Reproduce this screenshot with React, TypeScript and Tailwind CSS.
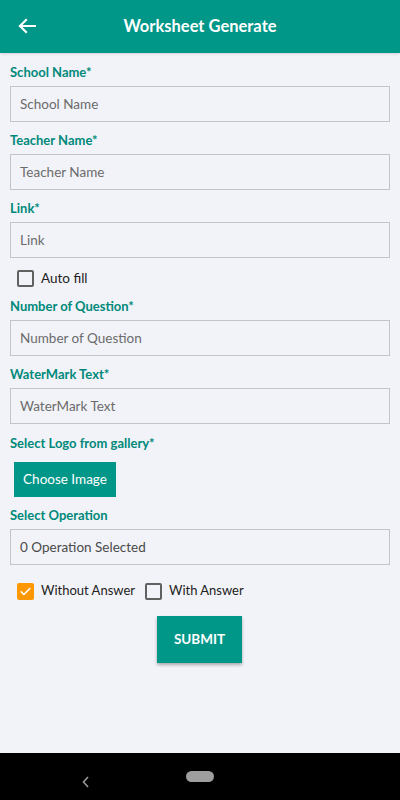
import React from "react";

const Field = ({ label, placeholder, dark }: { label: string; placeholder: string; dark?: boolean }) => (
  <div className="flex flex-col">
    <div className="h-[20px] flex items-center text-[13px] font-bold text-[#00897b] leading-none">{label}</div>
    <div className="mt-[4px] h-[36px] border border-[#c4c4c8] flex items-center px-[9px]">
      <span className={`text-[13.5px] ${dark ? "text-[#4a4a4a]" : "text-[#6b6b6b]"}`}>{placeholder}</span>
    </div>
  </div>
);

const Box = ({ checked }: { checked?: boolean }) =>
  checked ? (
    <div className="w-[17px] h-[17px] rounded-[2px] bg-[#ff9800] flex items-center justify-center">
      <svg width="13" height="13" viewBox="0 0 24 24" fill="none" stroke="white" strokeWidth="3" strokeLinecap="round" strokeLinejoin="round">
        <path d="M4 12.5l5 5L20 6.5" />
      </svg>
    </div>
  ) : (
    <div className="w-[17px] h-[17px] rounded-[2px] border-2 border-[#616161]" />
  );

export default function App() {
  return (
    <div className="w-[400px] h-[800px] bg-[#f2f3f8] flex flex-col" style={{ fontFamily: 'Lato, "Noto Sans", sans-serif' }}>
      <div className="h-[53px] bg-[#009688] flex items-center relative shadow-sm">
        <svg className="absolute left-[18px] top-[18px]" width="18" height="16" viewBox="0 0 18 16" fill="none" stroke="white" strokeWidth="2.2" strokeLinecap="square">
          <path d="M2 8h15M8 2L2 8l6 6" />
        </svg>
        <div className="w-full text-center text-white text-[16.5px] font-bold">Worksheet Generate</div>
      </div>
      <div className="flex-1 flex flex-col px-[10px] pt-[9px]">
        <Field label="School Name*" placeholder="School Name" />
        <div className="h-[8px]" />
        <Field label="Teacher Name*" placeholder="Teacher Name" />
        <div className="h-[8px]" />
        <Field label="Link*" placeholder="Link" />
        <div className="flex items-center h-[24px] mt-[8px] pl-[7px] gap-[7px]">
          <Box />
          <span className="text-[13.5px] text-[#222]">Auto fill</span>
        </div>
        <div className="h-[6px]" />
        <Field label="Number of Question*" placeholder="Number of Question" />
        <div className="h-[8px]" />
        <Field label="WaterMark Text*" placeholder="WaterMark Text" />
        <div className="h-[9px] shrink-0" />
        <div className="h-[20px] flex items-center text-[13px] font-bold text-[#00897b] leading-none">Select Logo from gallery*</div>
        <div className="mt-[9px] ml-[4px] w-[102px] h-[35px] bg-[#009688] flex items-center justify-center text-white text-[13.5px]">Choose Image</div>
        <div className="h-[8px]" />
        <Field label="Select Operation" placeholder="0 Operation Selected" dark />
        <div className="flex items-center h-[24px] mt-[14px] pl-[7px]">
          <Box checked />
          <span className="ml-[7px] text-[13px] text-[#222]">Without Answer</span>
          <div className="ml-[10px]"><Box /></div>
          <span className="ml-[7px] text-[13px] text-[#222]">With Answer</span>
        </div>
        <div className="flex justify-center mt-[13px]">
          <div className="ml-[-1px] w-[85px] h-[47px] bg-[#009688] flex items-center justify-center text-white text-[13.5px] font-bold shadow-[0_2px_3px_rgba(0,0,0,0.3)]">SUBMIT</div>
        </div>
      </div>
      <div className="h-[47px] bg-black flex items-center justify-center relative">
        <svg className="absolute left-[82px] top-[23px]" width="8" height="12" viewBox="0 0 8 12" fill="none" stroke="#9e9e9e" strokeWidth="1.5">
          <path d="M6 1L1.5 6L6 11" />
        </svg>
        <div className="w-[28px] h-[11px] rounded-full bg-[#9e9e9e]" />
      </div>
    </div>
  );
}
